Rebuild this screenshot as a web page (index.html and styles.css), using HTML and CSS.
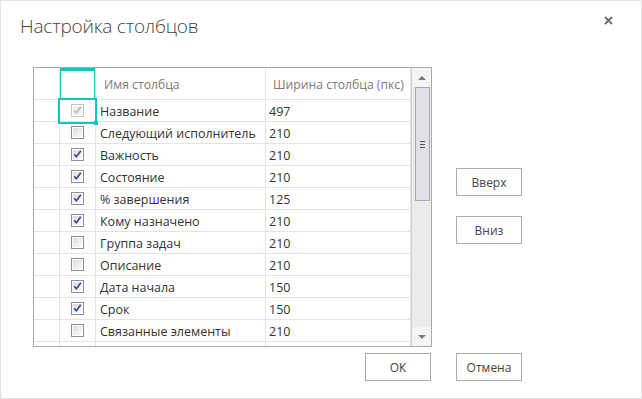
FILE: index.html
```html
<!DOCTYPE html>
<html lang="ru">
<head>
<meta charset="utf-8">
<link rel="stylesheet" href="styles.css">
</head>
<body>
<svg width="0" height="0" class="defs">
  <defs>
    <linearGradient id="cbg" x1="0" y1="0" x2="1" y2="1">
      <stop offset="0" stop-color="#dcdcdc"/>
      <stop offset="1" stop-color="#fafafa"/>
    </linearGradient>
    <symbol id="cb-off" viewBox="0 0 13 13">
      <rect x="0.5" y="0.5" width="12" height="12" fill="#fff" stroke="#8e8e8e"/>
      <rect x="2" y="2" width="9" height="9" fill="url(#cbg)"/>
    </symbol>
    <symbol id="cb-on" viewBox="0 0 13 13">
      <rect x="0.5" y="0.5" width="12" height="12" fill="#fff" stroke="#8e8e8e"/>
      <rect x="2" y="2" width="9" height="9" fill="url(#cbg)"/>
      <path d="M3.2 6.4 L5.4 8.8 L9.8 2.8" fill="none" stroke="#34469a" stroke-width="1.6"/>
    </symbol>
    <symbol id="cb-dis" viewBox="0 0 13 13">
      <rect x="0.5" y="0.5" width="12" height="12" fill="#fff" stroke="#c4c4c4"/>
      <rect x="2" y="2" width="9" height="9" fill="#f0f0f0"/>
      <path d="M3.2 6.4 L5.4 8.8 L9.8 2.8" fill="none" stroke="#b4b4b4" stroke-width="1.5"/>
    </symbol>
  </defs>
</svg>
<div class="dialog">
  <div class="title">Настройка столбцов</div>
  <button class="close" aria-label="Закрыть">
    <svg width="9" height="9" viewBox="0 0 9 9"><path d="M1 1 L8 8 M8 1 L1 8" stroke="#6b6b6b" stroke-width="1.8"/></svg>
  </button>
  <div class="body">
    <div class="grid">
      <div class="table">
        <div class="row head">
          <div class="c ind"></div>
          <div class="c chk sel-head"></div>
          <div class="c name">Имя столбца</div>
          <div class="c width">Ширина столбца (пкс)</div>
        </div>
        <div class="row"><div class="c ind"></div><div class="c chk"><svg class="cb"><use href="#cb-dis"/></svg></div><div class="c name">Название</div><div class="c width">497</div></div>
        <div class="row"><div class="c ind"></div><div class="c chk"><svg class="cb"><use href="#cb-off"/></svg></div><div class="c name">Следующий исполнитель</div><div class="c width">210</div></div>
        <div class="row"><div class="c ind"></div><div class="c chk"><svg class="cb"><use href="#cb-on"/></svg></div><div class="c name">Важность</div><div class="c width">210</div></div>
        <div class="row"><div class="c ind"></div><div class="c chk"><svg class="cb"><use href="#cb-on"/></svg></div><div class="c name">Состояние</div><div class="c width">210</div></div>
        <div class="row"><div class="c ind"></div><div class="c chk"><svg class="cb"><use href="#cb-on"/></svg></div><div class="c name">% завершения</div><div class="c width">125</div></div>
        <div class="row"><div class="c ind"></div><div class="c chk"><svg class="cb"><use href="#cb-on"/></svg></div><div class="c name">Кому назначено</div><div class="c width">210</div></div>
        <div class="row"><div class="c ind"></div><div class="c chk"><svg class="cb"><use href="#cb-off"/></svg></div><div class="c name">Группа задач</div><div class="c width">210</div></div>
        <div class="row"><div class="c ind"></div><div class="c chk"><svg class="cb"><use href="#cb-off"/></svg></div><div class="c name">Описание</div><div class="c width">210</div></div>
        <div class="row"><div class="c ind"></div><div class="c chk"><svg class="cb"><use href="#cb-on"/></svg></div><div class="c name">Дата начала</div><div class="c width">150</div></div>
        <div class="row"><div class="c ind"></div><div class="c chk"><svg class="cb"><use href="#cb-on"/></svg></div><div class="c name">Срок</div><div class="c width">150</div></div>
        <div class="row"><div class="c ind"></div><div class="c chk"><svg class="cb"><use href="#cb-off"/></svg></div><div class="c name">Связанные элементы</div><div class="c width">210</div></div>
        <div class="row"><div class="c ind"></div><div class="c chk"></div><div class="c name"></div><div class="c width"></div></div>
        <div class="selection"><span class="handle"></span></div>
      </div>
      <div class="scrollbar">
        <div class="arrow up"></div>
        <div class="track">
          <div class="thumb"><span class="grip"></span></div>
        </div>
        <div class="arrow down"></div>
      </div>
    </div>
    <div class="side">
      <button class="btn">Вверх</button>
      <button class="btn">Вниз</button>
    </div>
  </div>
  <div class="footer">
    <button class="btn">ОК</button>
    <button class="btn">Отмена</button>
  </div>
</div>
</body>
</html>
```
FILE: styles.css
```css
html, body {
  margin: 0;
  padding: 0;
  background: #fff;
}
.defs {
  position: absolute;
  width: 0;
  height: 0;
}
.dialog {
  position: relative;
  width: 642px;
  height: 399px;
  box-sizing: border-box;
  border: 1px solid #e2e2e2;
  font-family: "Open Sans", "Noto Sans", sans-serif;
  color: #333;
}
.title {
  padding: 11px 0 0 19px;
  font-size: 19px;
  line-height: 28px;
  font-weight: 300;
  color: #444;
  letter-spacing: -0.2px;
}
.close {
  position: absolute;
  top: 15px;
  right: 28px;
  border: 0;
  padding: 0;
  background: none;
  width: 9px;
  height: 9px;
  display: flex;
}
.body {
  display: flex;
  padding-left: 32px;
  margin-top: 27px;
}
.grid {
  display: flex;
  width: 399px;
  height: 280px;
  box-sizing: border-box;
  border: 1px solid #a9a9a9;
}
.table {
  position: relative;
  width: 377px;
  overflow: hidden;
}
.row {
  display: flex;
  height: 22px;
  box-sizing: border-box;
  border-bottom: 1px solid #e3e3e3;
}
.row.head {
  height: 32px;
}
.c {
  box-sizing: border-box;
  border-right: 1px solid #e3e3e3;
  display: flex;
  align-items: center;
  font-size: 12.5px;
  white-space: nowrap;
  overflow: hidden;
  padding-top: 2px;
}
.ind { width: 26px; }
.chk { width: 36px; justify-content: center; padding-top: 0; }
.name { width: 170px; padding-left: 4px; }
.width { width: 145px; padding-left: 3px; }
.head .c {
  color: #7a7a7a;
  font-size: 12.2px;
  padding-top: 2px;
}
.head .name { padding-left: 8px; }
.head .width { padding-left: 7px; }
.sel-head {
  box-shadow: inset 0 3px 0 #15c4bf, inset 1px 0 0 #15c4bf, inset -1px 0 0 #15c4bf;
}
.cb {
  width: 13px;
  height: 13px;
  display: block;
}
.selection {
  position: absolute;
  left: 24px;
  top: 30px;
  width: 39px;
  height: 26px;
  box-sizing: border-box;
  border: 2px solid #15c4bf;
}
.handle {
  position: absolute;
  right: -3px;
  bottom: -3px;
  width: 4px;
  height: 4px;
  background: #15c4bf;
}
.scrollbar {
  width: 20px;
  display: flex;
  flex-direction: column;
  background: #ececec;
  border-left: 1px solid #d0d0d0;
  box-sizing: border-box;
}
.arrow {
  height: 19px;
  display: flex;
  align-items: center;
  justify-content: center;
  background: #f4f4f4;
}
.arrow.up::before {
  content: "";
  border-left: 4px solid transparent;
  border-right: 4px solid transparent;
  border-bottom: 4px solid #7a7a7a;
}
.arrow.down::before {
  content: "";
  border-left: 4px solid transparent;
  border-right: 4px solid transparent;
  border-top: 4px solid #7a7a7a;
}
.track {
  flex: 1;
  padding: 0 1px 0 3px;
}
.thumb {
  height: 114px;
  box-sizing: border-box;
  border: 1px solid #a8a8a8;
  background: #dfe1e6;
  display: flex;
  align-items: center;
  justify-content: center;
}
.grip {
  width: 5px;
  height: 5px;
  border-top: 1px solid #555;
  border-bottom: 1px solid #555;
  position: relative;
}
.grip::after {
  content: "";
  position: absolute;
  left: 0;
  right: 0;
  top: 2px;
  border-top: 1px solid #555;
}
.side {
  display: flex;
  flex-direction: column;
  gap: 20px;
  margin-left: 24px;
  padding-top: 101px;
}
.btn {
  width: 66px;
  height: 28px;
  box-sizing: border-box;
  border: 1px solid #ababab;
  background: #fff;
  font-family: "Open Sans", "Noto Sans", sans-serif;
  font-size: 12px;
  color: #444;
  padding: 0;
}
.footer {
  display: flex;
  justify-content: flex-end;
  gap: 25px;
  padding-right: 119px;
  margin-top: 6px;
}
```
